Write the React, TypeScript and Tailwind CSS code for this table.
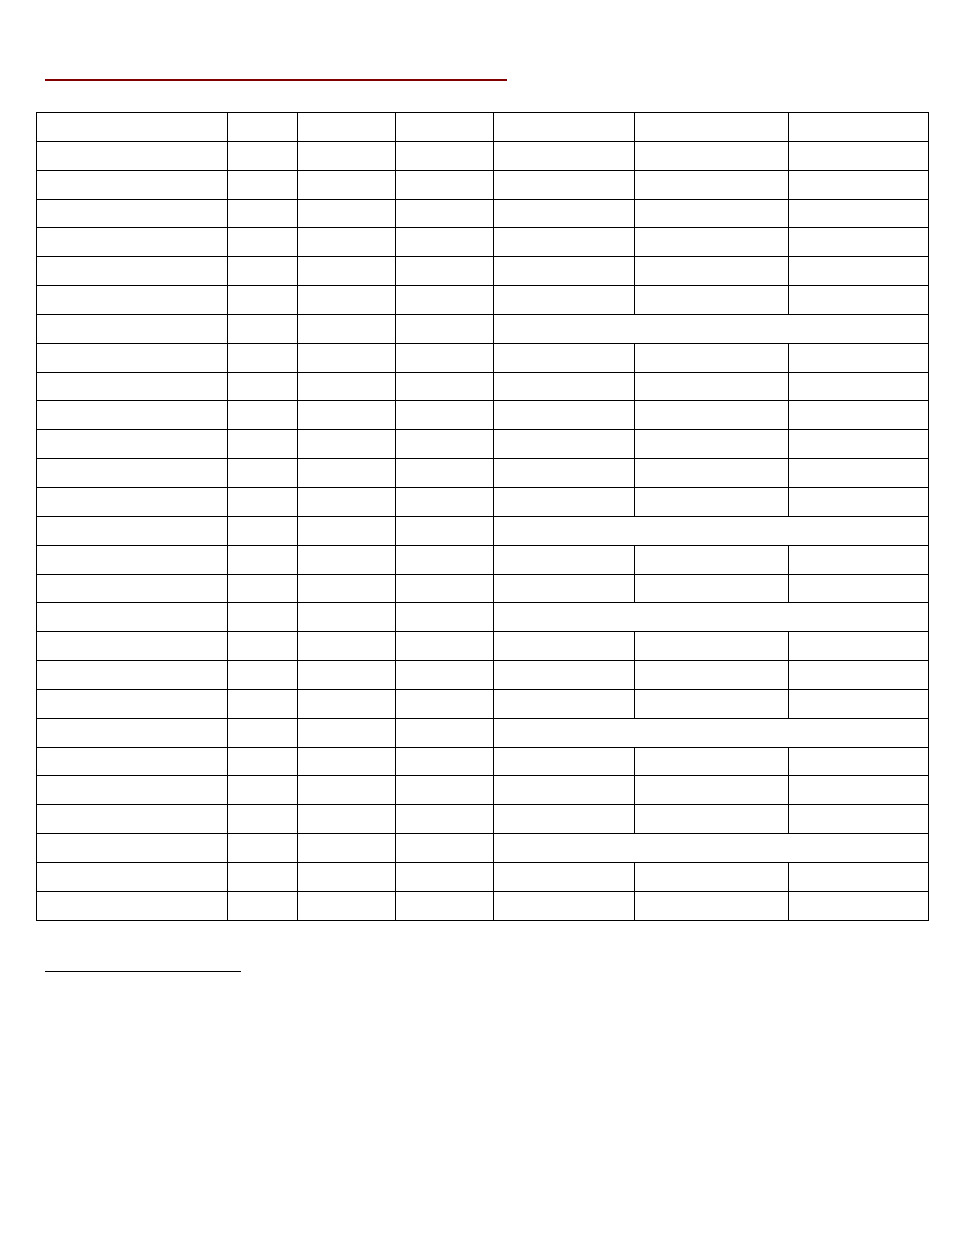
const columnWidths = [191, 70, 98, 98, 141, 154, 140];

// rows where the last three cells are joined into one
const mergedRows = new Set([7, 14, 17, 21, 25]);

const rowCount = 28;

export default function App() {
  const rows = Array.from({ length: rowCount }, (_, i) => i);

  return (
    <div className="w-[954px] h-[1235px] bg-white" style={{ fontFamily: '"Liberation Sans", Arial, sans-serif' }}>
      <div className="pt-[79px] pl-[45px]">
        <div className="w-[462px] h-[2px] bg-[#800000]" />
      </div>

      <div className="pt-[31px] pl-[36px]">
        <table className="table-fixed border-collapse w-[893px]">
          <colgroup>
            {columnWidths.map((w, i) => (
              <col key={i} style={{ width: w }} />
            ))}
          </colgroup>
          <tbody>
            {rows.map((r) => (
              <tr key={r} className="h-[28.85px]">
                <td className="border border-black p-0" />
                <td className="border border-black p-0" />
                <td className="border border-black p-0" />
                <td className="border border-black p-0" />
                {mergedRows.has(r) ? (
                  <td colSpan={3} className="border border-black p-0" />
                ) : (
                  <>
                    <td className="border border-black p-0" />
                    <td className="border border-black p-0" />
                    <td className="border border-black p-0" />
                  </>
                )}
              </tr>
            ))}
          </tbody>
        </table>
      </div>

      <div className="pt-[50px] pl-[45px]">
        <div className="w-[196px] h-px bg-black" />
      </div>
    </div>
  );
}
